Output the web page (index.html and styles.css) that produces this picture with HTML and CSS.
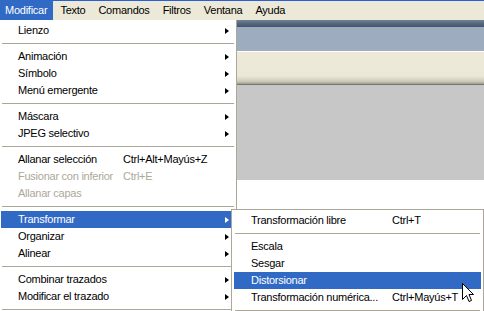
FILE: index.html
```html
<!DOCTYPE html>
<html>

<head>
    <title>Modificar menu</title>
    <meta charset="utf-8">
    <link rel="stylesheet" href="styles.css">
</head>

<body>
    <div class="screen">
        <div class="menubar">
            <span class="bar-item active">Modificar</span>
            <span class="bar-item">Texto</span>
            <span class="bar-item">Comandos</span>
            <span class="bar-item">Filtros</span>
            <span class="bar-item">Ventana</span>
            <span class="bar-item">Ayuda</span>
        </div>

        <div class="workspace">
            <div class="band-title"></div>
            <div class="band-tabs"></div>
            <div class="band-toolbar"></div>
            <div class="band-canvas"></div>
            <div class="band-page"></div>
        </div>

        <div class="menu menu-main">
            <div class="item"><span>Lienzo</span><span></span><span class="arrow"></span></div>
            <div class="sep"></div>
            <div class="item"><span>Animación</span><span></span><span class="arrow"></span></div>
            <div class="item"><span>Símbolo</span><span></span><span class="arrow"></span></div>
            <div class="item"><span>Menú emergente</span><span></span><span class="arrow"></span></div>
            <div class="sep"></div>
            <div class="item"><span>Máscara</span><span></span><span class="arrow"></span></div>
            <div class="item"><span>JPEG selectivo</span><span></span><span class="arrow"></span></div>
            <div class="sep"></div>
            <div class="item"><span>Allanar selección</span><span>Ctrl+Alt+Mayús+Z</span><span></span></div>
            <div class="item disabled"><span>Fusionar con inferior</span><span>Ctrl+E</span><span></span></div>
            <div class="item disabled"><span>Allanar capas</span><span></span><span></span></div>
            <div class="sep"></div>
            <div class="item selected"><span>Transformar</span><span></span><span class="arrow"></span></div>
            <div class="item"><span>Organizar</span><span></span><span class="arrow"></span></div>
            <div class="item"><span>Alinear</span><span></span><span class="arrow"></span></div>
            <div class="sep"></div>
            <div class="item"><span>Combinar trazados</span><span></span><span class="arrow"></span></div>
            <div class="item"><span>Modificar el trazado</span><span></span><span class="arrow"></span></div>
            <div class="sep"></div>
            <div class="tail"></div>
        </div>

        <div class="menu menu-sub">
            <div class="item"><span>Transformación libre</span><span>Ctrl+T</span></div>
            <div class="sep"></div>
            <div class="item"><span>Escala</span><span></span></div>
            <div class="item"><span>Sesgar</span><span></span></div>
            <div class="item selected"><span>Distorsionar</span><span></span></div>
            <div class="item"><span>Transformación numérica...</span><span>Ctrl+Mayús+T</span></div>
            <div class="sep"></div>
            <div class="tail"></div>
        </div>

        <svg class="cursor" width="13" height="20" viewBox="0 0 13 20">
            <path d="M0.5 0.5 L0.5 16.5 L4.5 12.5 L7 18.5 L9.5 17.5 L7 11.5 L11.5 11.5 Z" fill="#fff" stroke="#000" stroke-width="1" stroke-linejoin="miter"/>
        </svg>
    </div>
</body>

</html>
```

FILE: styles.css
```css
body {
    margin: 0;
    padding: 0;
    background: #fff;
    font-family: "Liberation Sans", Arial, sans-serif;
    font-size: 11px;
    letter-spacing: -0.25px;
    color: #000;
}

.screen {
    position: relative;
    width: 484px;
    height: 311px;
    overflow: hidden;
}

/* menu bar */

.menubar {
    display: flex;
    height: 20px;
    background: linear-gradient(#2b5fd8 1px, #ece9d8 1px);
}

.bar-item {
    padding: 0 6px 0 5px;
    margin-right: 2px;
    line-height: 20px;
}

.bar-item.active {
    background: #316ac5;
    color: #fff;
}

/* background of the application window */

.workspace {
    display: flex;
    flex-direction: column;
}

.band-title {
    height: 7px;
    background: linear-gradient(#71849a, #56677b 50%, #44546a);
}

.band-tabs {
    height: 24px;
    background: #9dacbf;
    border-bottom: 1px solid #fff;
}

.band-toolbar {
    height: 32px;
    background: linear-gradient(#ece9d8 0, #ebe8d7 24px, #dcd8c7 27px, #c9c5b5 30px, #a9a699 31px);
    border-bottom: 1px solid #77756a;
}

.band-canvas {
    height: 95px;
    background: #c7c7c7;
}

.band-page {
    height: 140px;
    background: #fff;
}

/* drop-down menus */

.menu {
    position: absolute;
    box-sizing: border-box;
    background: #fff;
    border: 1px solid #aca899;
    padding: 2px;
}

.menu-main {
    left: -2px;
    top: 20px;
    width: 239px;
    border-top: none;
}

.menu-sub {
    left: 231px;
    top: 209px;
    width: 253px;
}

.item {
    display: grid;
    align-items: center;
    height: 17px;
    line-height: 17px;
    white-space: nowrap;
}

.menu-main .item {
    grid-template-columns: 105px 1fr 4px;
    padding: 0 5px 0 17px;
}

.menu-sub .item {
    grid-template-columns: 141px 1fr;
    padding: 0 5px 0 17px;
}

.item.selected {
    background: #316ac5;
    color: #fff;
}

.item.disabled {
    color: #aca899;
}

.sep {
    height: 1px;
    margin: 4px 0 4px 1px;
    background: #aca899;
}

.menu-sub .sep {
    margin: 4px 1px;
}

.tail {
    height: 17px;
}

.arrow {
    width: 0;
    height: 0;
    border-left: 4px solid #000;
    border-top: 3.5px solid transparent;
    border-bottom: 3.5px solid transparent;
}

.item.selected .arrow {
    border-left-color: #fff;
}

.cursor {
    position: absolute;
    left: 462px;
    top: 283px;
}
```
